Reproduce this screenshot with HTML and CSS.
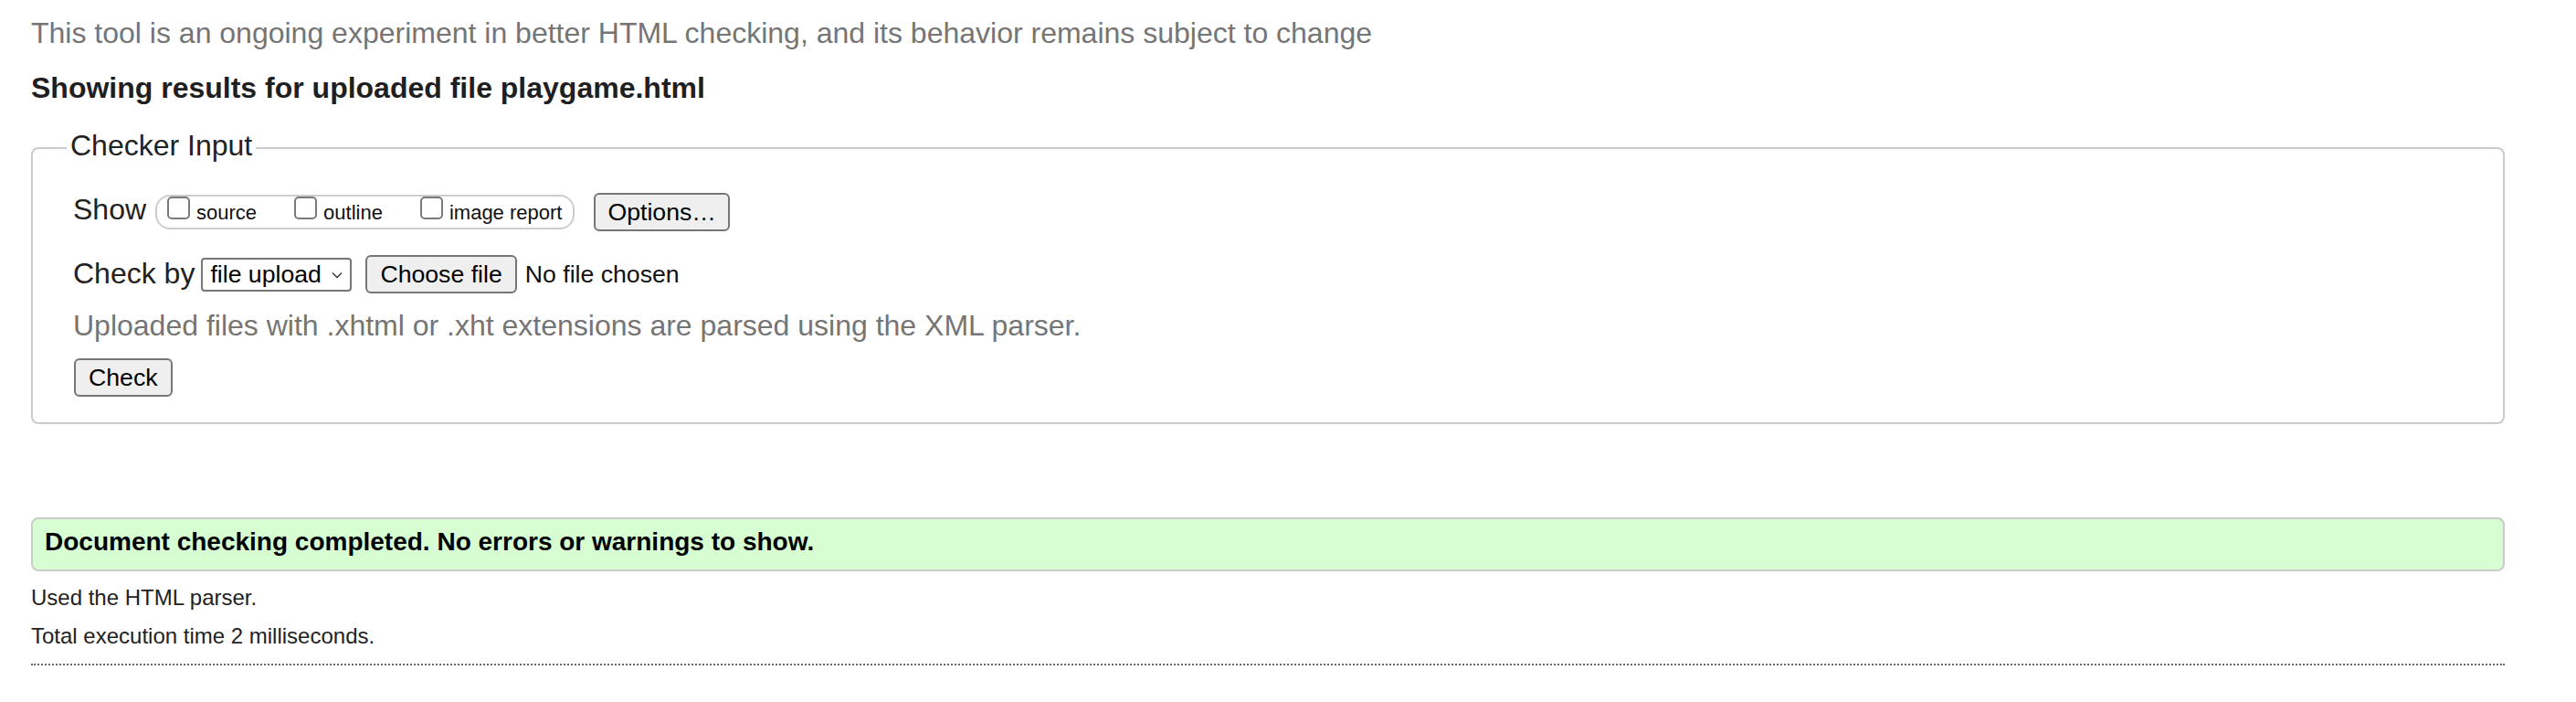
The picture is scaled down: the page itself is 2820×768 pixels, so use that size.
FILE: index.html
```html
<!DOCTYPE html>
<html lang="en">
<head>
<meta charset="utf-8">
<title>Nu Html Checker</title>
<link rel="stylesheet" href="styles.css">
</head>
<body>
<div class="page">
  <p class="intro">This tool is an ongoing experiment in better HTML checking, and its behavior remains subject to change</p>
  <h2 class="results-title">Showing results for uploaded file playgame.html</h2>

  <form class="checker-form">
    <fieldset class="checker">
      <legend class="checker-legend">Checker Input</legend>

      <div class="row row-show">
        <span class="row-label show-label">Show</span>
        <span class="show-group">
          <label class="opt"><input type="checkbox" class="cb"><span class="opt-text">source</span></label>
          <label class="opt"><input type="checkbox" class="cb"><span class="opt-text">outline</span></label>
          <label class="opt opt-last"><input type="checkbox" class="cb"><span class="opt-text">image report</span></label>
        </span>
        <button type="button" class="btn btn-options">Options…</button>
      </div>

      <div class="row row-checkby">
        <span class="row-label checkby-label">Check by</span>
        <span class="select-wrap">
          <select class="select">
            <option>file upload</option>
          </select>
          <svg class="chevron" width="12" height="8" viewBox="0 0 12 8" aria-hidden="true"><path d="M1 1.5 L6 6.5 L11 1.5" fill="none" stroke="#333" stroke-width="1.4"/></svg>
        </span>
        <button type="button" class="btn btn-file">Choose file</button>
        <span class="file-status">No file chosen</span>
      </div>

      <p class="note">Uploaded files with .xhtml or .xht extensions are parsed using the XML parser.</p>

      <div class="row-submit">
        <button type="button" class="btn btn-check">Check</button>
      </div>
    </fieldset>
  </form>

  <p class="success">Document checking completed. No errors or warnings to show.</p>
  <p class="meta meta-first">Used the HTML parser.</p>
  <p class="meta">Total execution time 2 milliseconds.</p>
  <hr class="rule">
</div>
</body>
</html>
```

FILE: styles.css
```css
html, body {
  margin: 0;
  padding: 0;
  background: #ffffff;
}

body {
  font-family: "Liberation Sans", Arial, Helvetica, sans-serif;
  color: #222222;
}

.page {
  width: 2708px;
  margin-left: 34px;
  padding-top: 18px;
}

.intro {
  margin: 0;
  font-size: 32px;
  line-height: 36px;
  color: #757575;
}

.results-title {
  margin: 24px 0 0;
  font-size: 32px;
  line-height: 36px;
  font-weight: bold;
  color: #1f1f22;
}

.checker-form {
  margin: 27px 0 0;
}

.checker {
  margin: 0;
  min-width: 0;
  border: 2px solid #cbcbcb;
  border-radius: 8px;
  padding: 0 44px 28px 44px;
}

.checker-legend {
  margin-left: -7px;
  padding: 0 4px 6px;
  font-size: 32px;
  line-height: 36px;
  color: #222222;
}

.row {
  display: flex;
  align-items: center;
  height: 42px;
}

.row-show {
  margin-top: 28px;
}

.row-checkby {
  margin-top: 26px;
}

.row-label {
  font-size: 32px;
  line-height: 36px;
  color: #222222;
}

.show-label {
  margin-right: 10px;
  margin-bottom: 6px;
}

.checkby-label {
  margin-bottom: 2px;
}

.show-group {
  display: flex;
  align-items: baseline;
  box-sizing: border-box;
  height: 38px;
  padding: 0 12px 0 11px;
  border: 2px solid #cdcdcd;
  border-radius: 16px;
}

.opt {
  display: flex;
  align-items: baseline;
  margin-right: 41px;
}

.opt-last {
  margin-right: 0;
}

.cb {
  -webkit-appearance: none;
  appearance: none;
  box-sizing: border-box;
  width: 25px;
  height: 25px;
  margin: 0 7px 0 0;
  border: 2px solid #7a7a7a;
  border-radius: 5px;
  background: #ffffff;
}

.opt-text {
  font-size: 22px;
  line-height: 25px;
  color: #111111;
}

.btn {
  box-sizing: border-box;
  height: 42px;
  margin: 0;
  padding: 0 14px;
  border: 2px solid #767676;
  border-radius: 6px;
  background: #efefef;
  font-family: "Liberation Sans", Arial, Helvetica, sans-serif;
  font-size: 26.67px;
  line-height: 30px;
  color: #000000;
}

.btn-options {
  margin-left: 21px;
  padding: 0 13px;
}

.select-wrap {
  position: relative;
  display: inline-flex;
  margin-left: 7px;
}

.select {
  -webkit-appearance: none;
  appearance: none;
  box-sizing: border-box;
  width: 165px;
  height: 37px;
  margin: 0;
  padding: 0 0 0 8px;
  border: 2px solid #767676;
  border-radius: 4px;
  background: #ffffff;
  font-family: "Liberation Sans", Arial, Helvetica, sans-serif;
  font-size: 26.67px;
  color: #000000;
}

.chevron {
  position: absolute;
  right: 10px;
  top: 15px;
  pointer-events: none;
}

.btn-file {
  margin-left: 15px;
  padding: 0 14px;
}

.file-status {
  margin-left: 9px;
  font-size: 26.67px;
  line-height: 30px;
  color: #111111;
}

.note {
  margin: 17px 0 0;
  font-size: 32px;
  line-height: 36px;
  color: #757575;
}

.row-submit {
  margin-top: 18px;
  display: flex;
  padding-left: 1px;
}

.btn-check {
  padding: 0 14px;
}

.success {
  margin: 102px 0 0;
  padding: 9px 13px 14px;
  border: 2px solid #cbcbcb;
  border-radius: 8px;
  background: #d7fdd2;
  font-size: 28px;
  line-height: 32px;
  font-weight: bold;
  color: #000000;
}

.meta {
  margin: 14px 0 0;
  font-size: 24px;
  line-height: 28px;
  color: #222222;
}

.meta-first {
  margin-top: 15px;
}

.rule {
  margin: 16px 0 0;
  height: 0;
  border: 0;
  border-top: 2px dotted #6a6a6a;
}
```
